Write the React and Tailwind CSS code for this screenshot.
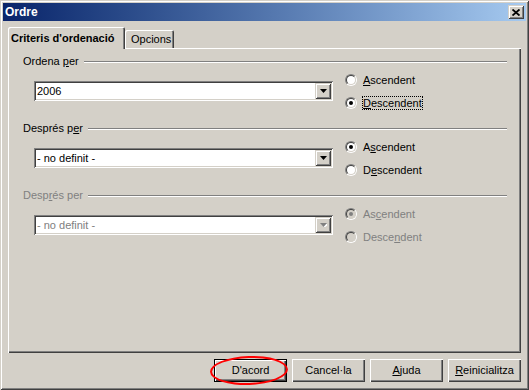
import React from 'react';

const RAISED = 'shadow-[inset_1px_1px_#d4d0c8,inset_-1px_-1px_#404040,inset_2px_2px_#fff,inset_-2px_-2px_#808080]';
const SUNKEN = 'shadow-[inset_1px_1px_#808080,inset_-1px_-1px_#fff,inset_2px_2px_#404040,inset_-2px_-2px_#d4d0c8]';

const GROUPS = [
  {
    label: 'Ordena per', ul: 7, value: '2006', disabled: false,
    radios: [
      { text: 'Ascendent', ul: 0, checked: false },
      { text: 'Descendent', ul: 0, checked: true, focus: true },
    ],
  },
  {
    label: 'Després per', ul: 9, value: '- no definit -', disabled: false,
    radios: [
      { text: 'Ascendent', ul: 1, checked: true },
      { text: 'Descendent', ul: 1, checked: false },
    ],
  },
  {
    label: 'Després per', ul: 4, value: '- no definit -', disabled: true,
    radios: [
      { text: 'Ascendent', ul: 2, checked: true },
      { text: 'Descendent', ul: 5, checked: false },
    ],
  },
];

function Mn({ text, at }) {
  if (at < 0) return text;
  return (
    <>
      {text.slice(0, at)}
      <u>{text[at]}</u>
      {text.slice(at + 1)}
    </>
  );
}

function Radio({ text, ul, checked, focus, disabled }) {
  return (
    <div className="flex items-center h-[13px]">
      <div className="w-[12px] h-[12px] rounded-full border border-t-[#808080] border-l-[#808080] border-r-white border-b-white">
        <div
          className={`w-full h-full rounded-full border border-t-[#404040] border-l-[#404040] border-r-[#d4d0c8] border-b-[#d4d0c8] flex items-center justify-center ${disabled ? 'bg-[#d4d0c8]' : 'bg-white'}`}
        >
          {checked && (
            <div className={`w-[4px] h-[4px] rounded-full ${disabled ? 'bg-[#808080]' : 'bg-black'}`} />
          )}
        </div>
      </div>
      <span
        className={`ml-[5px] border leading-[12px] ${focus ? 'border-dotted border-black' : 'border-transparent'} ${disabled ? 'text-[#808080]' : ''}`}
      >
        <Mn text={text} at={ul} />
      </span>
    </div>
  );
}

function Combo({ value, disabled }) {
  return (
    <div className={`relative w-[299px] h-[20px] bg-white ${SUNKEN} flex items-center`}>
      <span className={`pl-[3px] ${disabled ? 'text-[#808080]' : ''}`}>{value}</span>
      <div className={`absolute right-[2px] top-[2px] w-[16px] h-[16px] bg-[#d4d0c8] ${RAISED} flex items-center justify-center`}>
        <svg width="7" height="4" viewBox="0 0 7 4">
          {disabled && <path d="M1 1 H8 L4.5 5 Z" fill="#fff" />}
          <path d="M0 0 H7 L3.5 4 Z" fill={disabled ? '#808080' : '#000'} />
        </svg>
      </div>
    </div>
  );
}

function Group({ group }) {
  return (
    <div className="h-[67px]">
      <div className="flex items-center h-[13px]">
        <span className={group.disabled ? 'text-[#808080]' : ''}>
          <Mn text={group.label} at={group.ul} />
        </span>
        <div className="flex-1 ml-[5px] h-[2px] border-t border-t-[#808080] border-b border-b-white" />
      </div>
      <div className="flex mt-[5px]">
        <div className="ml-[11px] mt-[8px]">
          <Combo value={group.value} disabled={group.disabled} />
        </div>
        <div className="ml-[12px] flex flex-col gap-[10px]">
          {group.radios.map((r) => (
            <Radio key={r.text} {...r} disabled={group.disabled} />
          ))}
        </div>
      </div>
    </div>
  );
}

function Button({ children, isDefault }) {
  return (
    <button
      className={`w-[73px] h-[23px] bg-[#d4d0c8] flex items-center justify-center ${isDefault ? 'border border-black shadow-[inset_1px_1px_#fff,inset_-1px_-1px_#404040,inset_-2px_-2px_#808080]' : 'shadow-[inset_1px_1px_#fff,inset_-1px_-1px_#404040,inset_-2px_-2px_#808080]'}`}
    >
      {children}
    </button>
  );
}

export default function App() {
  return (
    <div className={`relative w-[529px] h-[390px] bg-[#d4d0c8] p-[3px] font-['Liberation_Sans',Arial,sans-serif] text-[11px] text-black ${RAISED}`}>
      {/* title bar */}
      <div className="h-[18px] flex items-center bg-linear-to-r from-[#0a246a] to-[#a6caf0]">
        <span className="pl-[2px] font-bold text-white text-[12px]">Ordre</span>
        <div className={`ml-auto mr-[2px] w-[16px] h-[14px] bg-[#d4d0c8] ${RAISED} flex items-center justify-center`}>
          <svg width="8" height="7" viewBox="0 0 8 7">
            <path d="M0.5 0.5 L7.5 6.5 M7.5 0.5 L0.5 6.5" stroke="#000" strokeWidth="1.8" />
          </svg>
        </div>
      </div>

      {/* tabs */}
      <div className="mt-[6px] mx-[5px] flex items-end h-[21px]">
        <div className="relative z-10 -mb-px h-[22px] w-[117px] bg-[#d4d0c8] rounded-t-[2px] shadow-[inset_1px_1px_#fff,inset_-1px_0_#404040,inset_-2px_0_#808080] flex items-center pl-[3px] font-bold">
          Criteris d'ordenació
        </div>
        <div className="h-[18px] w-[49px] bg-[#d4d0c8] rounded-t-[2px] shadow-[inset_1px_1px_#fff,inset_-1px_0_#404040,inset_-2px_0_#808080] flex items-center pl-[6px]">
          Opcions
        </div>
      </div>

      {/* panel */}
      <div className="mx-[5px] h-[305px] pt-[7px] pl-[15px] pr-[14px] shadow-[inset_1px_1px_#fff,inset_-1px_-1px_#404040,inset_-2px_-2px_#808080]">
        {GROUPS.map((g, i) => (
          <Group key={i} group={g} />
        ))}
      </div>

      {/* buttons */}
      <div className="mt-[6px] mx-[5px] flex justify-end gap-[5px]">
        <Button isDefault>D'acord</Button>
        <Button>Cancel·la</Button>
        <Button><Mn text="Ajuda" at={0} /></Button>
        <Button><Mn text="Reinicialitza" at={0} /></Button>
      </div>

      {/* red annotation ellipse */}
      <div className="absolute left-[210px] top-[356px] w-[78px] h-[29px] rounded-[50%] border-2 border-[#f00] -rotate-2" />
    </div>
  );
}
